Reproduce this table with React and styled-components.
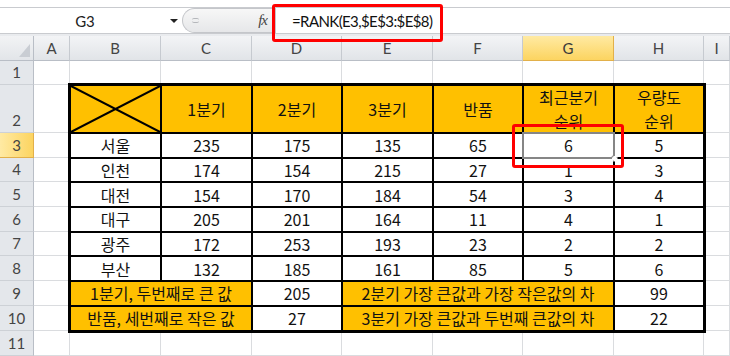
import React from 'react';
import styled, { createGlobalStyle } from 'styled-components';

const GlobalStyle = createGlobalStyle`
  html, body {
    margin: 0;
    padding: 0;
    background: #fff;
  }
  body {
    font-family: "Noto Sans CJK KR", "Noto Sans", sans-serif;
  }
`;

const Screen = styled.div`
  position: relative;
  width: 730px;
  height: 356px;
  overflow: hidden;
  background: #fff;
`;

const TopStrip = styled.div`
  height: 7px;
  background: #fff;
  border-bottom: 1px solid #c9cbcf;
`;

const FormulaBar = styled.div`
  display: flex;
  height: 25px;
  background: #fff;
  border-bottom: 1px solid #c9cbcf;
`;

const NameBox = styled.div`
  display: flex;
  align-items: center;
  width: 182px;
  background: #fff;
`;

const NameText = styled.span`
  width: 170px;
  text-align: center;
  font-family: Lato, "Liberation Sans", sans-serif;
  font-size: 15px;
  color: #222;
`;

const DropArrow = styled.span`
  width: 0;
  height: 0;
  border-left: 4px solid transparent;
  border-right: 4px solid transparent;
  border-top: 4px solid #222;
`;

const FxPill = styled.div`
  display: flex;
  align-items: center;
  justify-content: space-between;
  width: 93px;
  box-sizing: border-box;
  padding: 0 8px 0 9px;
  border: 1px solid #c4c6ca;
  border-right: none;
  border-radius: 13px 0 0 13px;
  background: linear-gradient(#f7f7f7, #e6e7e9);
`;

const Grip = styled.span`
  width: 7px;
  height: 3px;
  border-top: 1px solid #b5b7bb;
  border-bottom: 1px solid #b5b7bb;
  border-radius: 2px;
`;

const FxLabel = styled.span`
  font-family: "Liberation Serif", serif;
  font-style: italic;
  font-size: 15px;
  color: #444;
  letter-spacing: -1px;
`;

const FormulaInput = styled.div`
  flex: 1;
  display: flex;
  align-items: center;
  padding-left: 16px;
  border-left: 1px solid #c4c6ca;
  font-family: Lato, "Liberation Sans", sans-serif;
  font-size: 15px;
  letter-spacing: -0.6px;
  color: #111;
`;

const Gap = styled.div`
  height: 2px;
  background: #e9ebee;
`;

const Sheet = styled.div`
  display: grid;
  grid-template-columns: 34px 36px 91px 91px 90px 91px 90px 91px 90px 1fr;
  grid-template-rows: 25px 24px 48px repeat(8, 24.7px) 1fr;
  height: 320px;
`;

const Corner = styled.div`
  position: relative;
  box-sizing: border-box;
  background: linear-gradient(#f2f3f5, #e2e5e9);
  border-right: 1px solid #b9bec6;
  border-bottom: 1px solid #b9bec6;

  &::after {
    content: '';
    position: absolute;
    right: 3px;
    bottom: 3px;
    width: 11px;
    height: 13px;
    background: #c9cdd3;
    clip-path: polygon(100% 0, 100% 100%, 0 100%);
  }
`;

const ColHeader = styled.div`
  display: flex;
  align-items: center;
  justify-content: center;
  box-sizing: border-box;
  font-family: Lato, "Liberation Sans", sans-serif;
  font-size: 15px;
  color: ${(p) => (p.$active ? '#3a3a3a' : '#444')};
  background: ${(p) =>
    p.$active ? 'linear-gradient(#ffeaa3, #fcd460)' : 'linear-gradient(#f3f4f6, #e1e4e8)'};
  border-right: 1px solid ${(p) => (p.$active ? '#e2b04a' : '#c6cad0')};
  border-bottom: 1px solid ${(p) => (p.$active ? '#e2b04a' : '#b9bec6')};
`;

const RowHeader = styled.div`
  display: flex;
  align-items: flex-end;
  justify-content: center;
  box-sizing: border-box;
  padding-bottom: 2px;
  font-family: Lato, "Liberation Sans", sans-serif;
  font-size: 15px;
  line-height: 20px;
  color: #444;
  background: ${(p) => (p.$active ? 'linear-gradient(90deg, #ffeaa3, #fcd460)' : '#e4e7eb')};
  border-right: 1px solid ${(p) => (p.$active ? '#e2b04a' : '#b9bec6')};
  border-bottom: 1px solid ${(p) => (p.$active ? '#e2b04a' : '#cdd1d6')};
`;

const Blank = styled.div`
  box-sizing: border-box;
  border-right: 1px solid #dadcdf;
  border-bottom: 1px solid #dadcdf;
  grid-column: ${(p) => p.$col};
  grid-row: ${(p) => p.$row};
`;

const DataTable = styled.div`
  grid-column: 3 / 10;
  grid-row: 3 / 12;
  margin: -2px;
  position: relative;
  z-index: 1;
  display: grid;
  grid-template-columns: 89px 89px 88px 89px 88px 89px 88px;
  grid-template-rows: 46px repeat(8, minmax(0, 1fr));
  gap: 2px;
  padding: 3px;
  background: #000;
`;

const Cell = styled.div`
  position: relative;
  display: flex;
  align-items: center;
  justify-content: center;
  min-height: 0;
  text-align: center;
  font-size: 16px;
  line-height: ${(p) => (p.$head ? '24px' : '20px')};
  color: #111;
  white-space: pre-line;
  background: ${(p) => (p.$head ? '#ffc000' : '#fff')};
  grid-column: ${(p) => (p.$span ? `span ${p.$span}` : 'auto')};
`;

const Diagonal = styled.svg`
  position: absolute;
  inset: 0;
  width: 100%;
  height: 100%;
`;

const Selection = styled.span`
  position: absolute;
  inset: -2px;
  border: 2px solid #868686;
  pointer-events: none;

  &::after {
    content: '';
    position: absolute;
    right: -5px;
    bottom: -5px;
    width: 5px;
    height: 5px;
    border: 1px solid #777;
    border-radius: 50%;
    background: #fff;
  }
`;

const Highlight = styled.div`
  position: absolute;
  box-sizing: border-box;
  border: 3.5px solid #ff0000;
  border-radius: 3px;
  z-index: 5;
`;

const FormulaHighlight = styled(Highlight)`
  left: 272px;
  top: 4px;
  width: 171px;
  height: 38px;
`;

const CellHighlight = styled(Highlight)`
  left: 512px;
  top: 124px;
  width: 112px;
  height: 44px;
`;

const COLS = ['A', 'B', 'C', 'D', 'E', 'F', 'G', 'H', 'I'];

const HEAD = ['1분기', '2분기', '3분기', '반품', '최근분기\n순위', '우량도\n순위'];

const ROWS = [
  ['서울', '235', '175', '135', '65', '6', '5'],
  ['인천', '174', '154', '215', '27', '1', '3'],
  ['대전', '154', '170', '184', '54', '3', '4'],
  ['대구', '205', '201', '164', '11', '4', '1'],
  ['광주', '172', '253', '193', '23', '2', '2'],
  ['부산', '132', '185', '161', '85', '5', '6'],
];

const SUMMARY = [
  ['1분기, 두번째로 큰 값', '205', '2분기 가장 큰값과 가장 작은값의 차', '99'],
  ['반품, 세번째로 작은 값', '27', '3분기 가장 큰값과 두번째 큰값의 차', '22'],
];

const blanks = () => {
  const list = [];
  for (let c = 2; c <= 10; c += 1) list.push([c, 2]);
  for (let r = 3; r <= 12; r += 1) {
    list.push([2, r]);
    list.push([10, r]);
  }
  for (let c = 3; c <= 9; c += 1) list.push([c, 12]);
  return list;
};

const App = () => (
  <Screen>
    <GlobalStyle />
    <TopStrip />
    <FormulaBar>
      <NameBox>
        <NameText>G3</NameText>
        <DropArrow />
      </NameBox>
      <FxPill>
        <Grip />
        <FxLabel>fx</FxLabel>
      </FxPill>
      <FormulaInput>=RANK(E3,$E$3:$E$8)</FormulaInput>
    </FormulaBar>
    <Gap />

    <Sheet>
      <Corner />
      {COLS.map((c) => (
        <ColHeader key={c} $active={c === 'G'}>
          {c}
        </ColHeader>
      ))}
      {Array.from({ length: 11 }, (_, i) => (
        <RowHeader key={i} $active={i === 2} style={{ gridColumn: 1, gridRow: i + 2 }}>
          {i + 1}
        </RowHeader>
      ))}
      {blanks().map(([c, r]) => (
        <Blank key={`${c}-${r}`} $col={c} $row={r} />
      ))}

      <DataTable>
        <Cell $head>
          <Diagonal viewBox="0 0 100 100" preserveAspectRatio="none">
            <line x1="0" y1="0" x2="100" y2="100" stroke="#000" strokeWidth="2" vectorEffect="non-scaling-stroke" />
            <line x1="0" y1="100" x2="100" y2="0" stroke="#000" strokeWidth="2" vectorEffect="non-scaling-stroke" />
          </Diagonal>
        </Cell>
        {HEAD.map((h) => (
          <Cell key={h} $head>
            {h}
          </Cell>
        ))}
        {ROWS.map((row, ri) =>
          row.map((v, ci) => (
            <Cell key={`${ri}-${ci}`}>
              {v}
              {ri === 0 && ci === 5 && <Selection />}
            </Cell>
          ))
        )}
        {SUMMARY.map(([a, b, c, d]) => (
          <React.Fragment key={a}>
            <Cell $head $span={2}>{a}</Cell>
            <Cell>{b}</Cell>
            <Cell $head $span={3}>{c}</Cell>
            <Cell>{d}</Cell>
          </React.Fragment>
        ))}
      </DataTable>
    </Sheet>

    <FormulaHighlight />
    <CellHighlight />
  </Screen>
);

export default App;
